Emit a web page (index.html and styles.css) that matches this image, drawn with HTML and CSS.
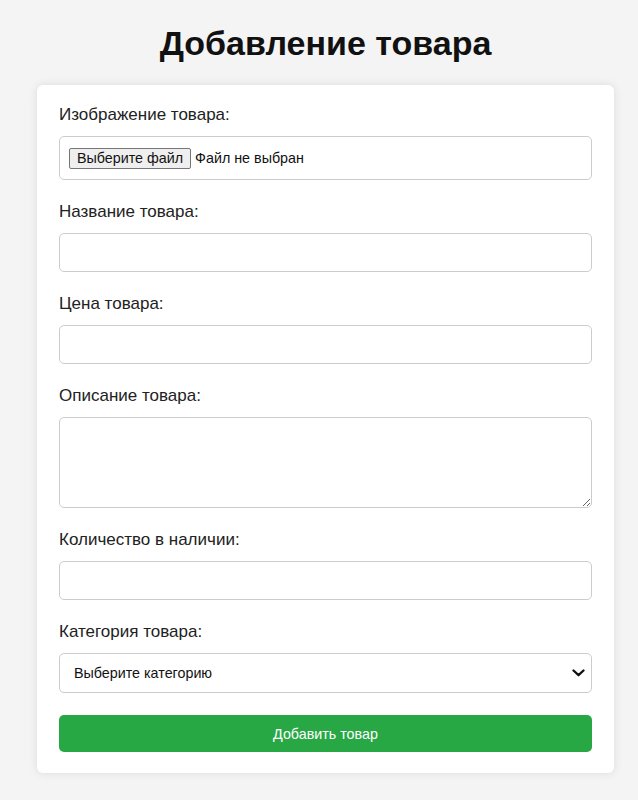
FILE: index.html
```html
<!DOCTYPE html>
<html lang="ru">
<head>
<meta charset="utf-8">
<title>Добавление товара</title>
<link rel="stylesheet" href="styles.css">
</head>
<body>
<div class="page">
  <h1 class="title">Добавление товара</h1>
  <form class="card">
    <div class="group">
      <label class="label">Изображение товара:</label>
      <div class="field file-field">
        <span class="file-btn">Выберите файл</span>
        <span class="file-text">Файл не выбран</span>
      </div>
    </div>
    <div class="group">
      <label class="label">Название товара:</label>
      <input class="field input" type="text">
    </div>
    <div class="group">
      <label class="label">Цена товара:</label>
      <input class="field input" type="text">
    </div>
    <div class="group">
      <label class="label">Описание товара:</label>
      <textarea class="field textarea"></textarea>
    </div>
    <div class="group">
      <label class="label">Количество в наличии:</label>
      <input class="field input" type="text">
    </div>
    <div class="group">
      <label class="label">Категория товара:</label>
      <div class="select-wrap">
        <select class="field select">
          <option>Выберите категорию</option>
        </select>
        <svg class="chevron" width="13" height="8" viewBox="0 0 13 8"><path d="M1.5 1.5 L6.5 6.2 L11.5 1.5" fill="none" stroke="#111" stroke-width="2.3" stroke-linecap="round" stroke-linejoin="round"/></svg>
      </div>
    </div>
    <button class="submit" type="button">Добавить товар</button>
  </form>
</div>
</body>
</html>
```
FILE: styles.css
```css
html, body {
  margin: 0;
  padding: 0;
  background: #f4f4f4;
  font-family: "Liberation Sans", Arial, sans-serif;
  color: #222;
}
.page {
  width: 577px;
  margin-left: 37px;
  padding-top: 21px;
  padding-bottom: 20px;
}
.title {
  margin: 0 0 20px 0;
  text-align: center;
  font-size: 34px;
  font-weight: bold;
  line-height: 44px;
  color: #111;
}
.card {
  display: block;
  background: #fff;
  border-radius: 6px;
  box-shadow: 0 0 10px rgba(0, 0, 0, 0.1);
  padding: 20px 22px 21px 22px;
}
.group {
  display: flex;
  flex-direction: column;
  margin-bottom: 22px;
}
.label {
  font-size: 17px;
  line-height: 20px;
  margin-bottom: 11px;
  color: #222;
}
.field {
  box-sizing: border-box;
  width: 100%;
  border: 1px solid #ccc;
  border-radius: 5px;
  background: #fff;
  font-family: "Liberation Sans", Arial, sans-serif;
  font-size: 14px;
  margin: 0;
}
.input {
  height: 39px;
  padding: 10px;
}
.file-field {
  height: 44px;
  padding: 0 9px;
  display: flex;
  align-items: center;
  gap: 4px;
  font-size: 14.3px;
}
.file-btn {
  display: inline-block;
  background: #efefef;
  border: 1px solid #767676;
  border-radius: 2px;
  padding: 1px 7px;
  line-height: 17px;
  color: #111;
}
.file-text {
  color: #111;
}
.textarea {
  height: 91px;
  padding: 10px;
  resize: vertical;
  display: block;
}
.select-wrap {
  position: relative;
}
.select {
  height: 40px;
  padding: 0 14px;
  appearance: none;
  -webkit-appearance: none;
  color: #111;
  font-size: 14.3px;
  display: block;
}
.chevron {
  position: absolute;
  right: 7px;
  top: 16px;
  pointer-events: none;
}
.submit {
  display: block;
  width: 100%;
  height: 37px;
  border: none;
  border-radius: 5px;
  background: #28a745;
  color: #fff;
  font-family: "Liberation Sans", Arial, sans-serif;
  font-size: 14.3px;
  margin: 0;
  padding: 0;
}
```
